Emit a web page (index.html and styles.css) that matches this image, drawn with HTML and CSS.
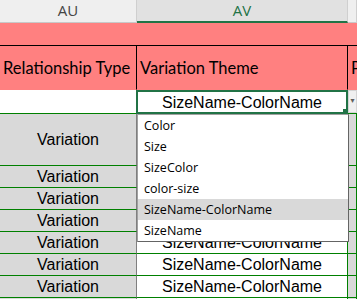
FILE: index.html
```html
<!DOCTYPE html>
<html>
<head>
<meta charset="utf-8">
<link rel="stylesheet" href="styles.css">
</head>
<body>
<div class="sheet">
  <div class="colhead">
    <div class="ch">AU</div>
    <div class="ch sel">AV</div>
    <div class="ch"></div>
  </div>
  <div class="pinkband"></div>
  <div class="grid">
    <div class="c hdr">Relationship Type</div>
    <div class="c hdr">Variation Theme</div>
    <div class="c hdr last">P</div>

    <div class="c white"></div>
    <div class="c active">SizeName-ColorName<span class="handle"></span></div>
    <div class="c btncell"><span class="ddbtn">&#9662;</span></div>

    <div class="c gray tall">Variation</div>
    <div class="c val tall">SizeName-ColorName</div>
    <div class="c gray tall"></div>

    <div class="c gray">Variation</div>
    <div class="c val">SizeName-ColorName</div>
    <div class="c gray"></div>

    <div class="c gray">Variation</div>
    <div class="c val">SizeName-ColorName</div>
    <div class="c gray"></div>

    <div class="c gray">Variation</div>
    <div class="c val">SizeName-ColorName</div>
    <div class="c gray"></div>

    <div class="c gray">Variation</div>
    <div class="c val">SizeName-ColorName</div>
    <div class="c gray"></div>

    <div class="c gray">Variation</div>
    <div class="c val">SizeName-ColorName</div>
    <div class="c gray"></div>

    <div class="c gray">Variation</div>
    <div class="c val">SizeName-ColorName</div>
    <div class="c gray"></div>

    <div class="c gray">Variation</div>
    <div class="c val">SizeName-ColorName</div>
    <div class="c gray"></div>
  </div>
  <ul class="dropdown">
    <li>Color</li>
    <li>Size</li>
    <li>SizeColor</li>
    <li>color-size</li>
    <li class="hl">SizeName-ColorName</li>
    <li>SizeName</li>
  </ul>
</div>
</body>
</html>
```

FILE: styles.css
```css
html, body {
  margin: 0;
  padding: 0;
  background: #ffffff;
  overflow: hidden;
}
.sheet {
  position: relative;
  width: 357px;
  height: 299px;
  overflow: hidden;
}
.colhead {
  display: grid;
  grid-template-columns: 137px 211px 1fr;
  height: 22px;
}
.ch {
  box-sizing: border-box;
  background: #efefef;
  border-right: 1px solid #cfcfcf;
  border-bottom: 1px solid #c8c8c8;
  font-family: "Open Sans", "Noto Sans", sans-serif;
  font-size: 15px;
  color: #444444;
  text-align: center;
  line-height: 21px;
}
.ch.sel {
  background: #e1e1e1;
  color: #217346;
  border-bottom: 2px solid #217346;
  border-right: 1px solid #cfcfcf;
}
.pinkband {
  height: 23px;
  background: #ff8080;
  border-bottom: 1px solid #000000;
}
.grid {
  display: grid;
  grid-template-columns: 137px 211px 1fr;
  grid-template-rows: 44px 24px 52px repeat(7, 22px);
}
.c {
  box-sizing: border-box;
  border-right: 1px solid #008000;
  border-bottom: 1px solid #008000;
  font-family: "Liberation Sans", Arial, sans-serif;
  font-size: 16px;
  color: #000000;
  display: flex;
  align-items: center;
  justify-content: center;
  white-space: nowrap;
  overflow: hidden;
  padding-top: 1px;
}
.hdr {
  background: #ff8080;
  border-right: 1px solid #000000;
  border-bottom: 1px solid #ff8080;
  font-family: "Lato", "Noto Sans", sans-serif;
  font-size: 16.5px;
  justify-content: flex-start;
  padding-left: 3px;
}
.hdr.last {
  border-right: none;
}
.white {
  background: #ffffff;
  border-right: none;
}
.active {
  position: relative;
  border: 2px solid #217346;
  margin-left: -1px;
  background: #ffffff;
}
.handle {
  position: absolute;
  right: -3px;
  bottom: -3px;
  width: 5px;
  height: 5px;
  background: #217346;
  border: 1px solid #ffffff;
}
.btncell {
  background: #ffffff;
  border-right: none;
  justify-content: flex-start;
  align-items: stretch;
  padding-top: 0;
}
.ddbtn {
  width: 14px;
  box-sizing: border-box;
  background: #f0f0f0;
  border: 1px solid #d4d4d4;
  font-family: "DejaVu Sans", sans-serif;
  font-size: 8px;
  color: #606060;
  display: flex;
  align-items: flex-start;
  justify-content: center;
  padding-top: 5px;
}
.gray {
  background: #d9d9d9;
}
.grid .gray:nth-child(3n+1) {
  border-right: 1px solid #7f7f7f;
}
.val {
  background: #ffffff;
}
.dropdown {
  position: absolute;
  left: 137px;
  top: 114px;
  width: 212px;
  margin: 0;
  padding: 0;
  list-style: none;
  box-sizing: border-box;
  background: #ffffff;
  border: 1px solid #a0a0a0;
  border-right-color: #646464;
  border-bottom-color: #646464;
}
.dropdown li {
  height: 21px;
  line-height: 21px;
  padding-left: 6px;
  font-family: "Open Sans", "Noto Sans", sans-serif;
  font-size: 12.5px;
  color: #000000;
}
.dropdown li.hl {
  background: #d9d9d9;
}
```
